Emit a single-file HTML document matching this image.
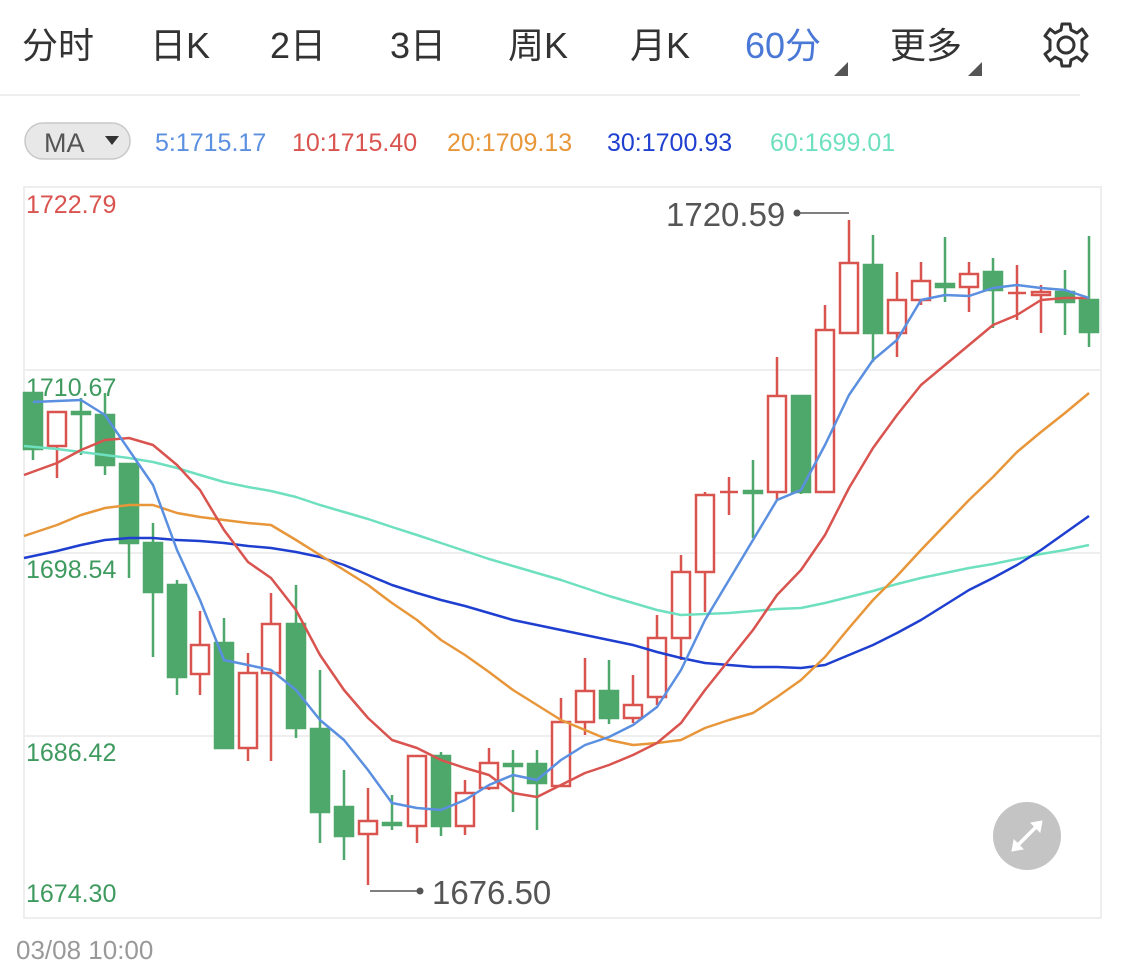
<!DOCTYPE html>
<html><head><meta charset="utf-8"><style>
html,body{margin:0;padding:0;background:#fff;width:1125px;height:975px;overflow:hidden}
svg{display:block}
text{font-family:"Liberation Sans","Noto Sans CJK SC",sans-serif}
</style></head><body>
<svg width="1125" height="975" viewBox="0 0 1125 975" xmlns="http://www.w3.org/2000/svg">
<g font-size="36" fill="#333">
<text x="22" y="58">分时</text>
<text x="150" y="58">日K</text>
<text x="270" y="58">2日</text>
<text x="390" y="58">3日</text>
<text x="508" y="58">周K</text>
<text x="630" y="58">月K</text>
<text x="745" y="58" fill="#4a78d6">60分</text>
<text x="890" y="58">更多</text>
</g>
<polygon points="848,62 848,76 834,76" fill="#555"/>
<polygon points="982,62 982,76 968,76" fill="#555"/>
<g transform="translate(1066,45)" fill="none" stroke="#333" stroke-width="3" stroke-linejoin="round">
<path d="M-4,-21 L4,-21 L5,-15 L11,-12 L16,-16 L21,-9 L16,-5 L16,5 L21,9 L16,16 L11,12 L5,15 L4,21 L-4,21 L-5,15 L-11,12 L-16,16 L-21,9 L-16,5 L-16,-5 L-21,-9 L-16,-16 L-11,-12 L-5,-15 Z"/>
<circle r="8"/>
</g>
<rect x="0" y="94" width="1080" height="2" fill="#eee"/>
<rect x="25" y="123" width="105" height="36" rx="18" fill="#e8e8e8" stroke="#c8c8c8" stroke-width="1.5"/>
<text x="44" y="152" font-size="27" fill="#555">MA</text>
<polygon points="105,136 119,136 112,145" fill="#333"/>
<g font-size="25">
<text x="155" y="151" fill="#5b8fe0">5:1715.17</text>
<text x="292" y="151" fill="#d9534f">10:1715.40</text>
<text x="447" y="151" fill="#e8963a">20:1709.13</text>
<text x="607" y="151" fill="#1e3fcf">30:1700.93</text>
<text x="770" y="151" fill="#6ee0c0">60:1699.01</text>
</g>
<rect x="24" y="187" width="1077" height="731" fill="none" stroke="#eee" stroke-width="2"/>
<g stroke="#eee" stroke-width="2">
<line x1="24" y1="370" x2="1101" y2="370"/>
<line x1="24" y1="553" x2="1101" y2="553"/>
<line x1="24" y1="736" x2="1101" y2="736"/>
</g>
<g font-size="25">
<text x="26" y="213" fill="#d9534f">1722.79</text>
<text x="26" y="396" fill="#3f9a5f">1710.67</text>
<text x="26" y="578" fill="#3f9a5f">1698.54</text>
<text x="26" y="761" fill="#3f9a5f">1686.42</text>
<text x="26" y="902" fill="#3f9a5f">1674.30</text>
</g>
<g stroke-width="2.5">
<g stroke="#4ea86b" fill="#4ea86b">
<line x1="33" y1="393" x2="33" y2="460"/><rect x="24" y="393" width="18" height="56"/>
<line x1="81" y1="398" x2="81" y2="455"/><rect x="72" y="412" width="18" height="2"/>
<line x1="105" y1="393" x2="105" y2="475"/><rect x="96" y="415" width="18" height="50"/>
<line x1="129" y1="464" x2="129" y2="578"/><rect x="120" y="464" width="18" height="79"/>
<line x1="153" y1="523" x2="153" y2="657"/><rect x="144" y="543" width="18" height="49"/>
<line x1="177" y1="580" x2="177" y2="695"/><rect x="168" y="585" width="18" height="92"/>
<line x1="224" y1="618" x2="224" y2="748"/><rect x="215" y="643" width="18" height="105"/>
<line x1="296" y1="585" x2="296" y2="738"/><rect x="287" y="624" width="18" height="104"/>
<line x1="320" y1="670" x2="320" y2="843"/><rect x="311" y="729" width="18" height="83"/>
<line x1="344" y1="770" x2="344" y2="860"/><rect x="335" y="807" width="18" height="29"/>
<line x1="392" y1="795" x2="392" y2="830"/><rect x="383" y="823" width="18" height="2"/>
<line x1="441" y1="752" x2="441" y2="836"/><rect x="432" y="756" width="18" height="70"/>
<line x1="513" y1="750" x2="513" y2="812"/><rect x="504" y="764" width="18" height="2"/>
<line x1="537" y1="750" x2="537" y2="830"/><rect x="528" y="764" width="18" height="19"/>
<line x1="609" y1="660" x2="609" y2="724"/><rect x="600" y="691" width="18" height="27"/>
<line x1="753" y1="460" x2="753" y2="538"/><rect x="744" y="491" width="18" height="2"/>
<line x1="801" y1="396" x2="801" y2="494"/><rect x="792" y="396" width="18" height="96"/>
<line x1="873" y1="235" x2="873" y2="362"/><rect x="864" y="265" width="18" height="68"/>
<line x1="945" y1="237" x2="945" y2="302"/><rect x="936" y="284" width="18" height="3"/>
<line x1="993" y1="258" x2="993" y2="328"/><rect x="984" y="272" width="18" height="18"/>
<line x1="1065" y1="270" x2="1065" y2="335"/><rect x="1056" y="292" width="18" height="10"/>
<line x1="1089" y1="236" x2="1089" y2="347"/><rect x="1080" y="300" width="18" height="32"/>
</g>
<g stroke="#d9534f" fill="#fff">
<line x1="57" y1="412" x2="57" y2="478"/><rect x="48" y="412" width="18" height="34"/>
<line x1="200" y1="611" x2="200" y2="695"/><rect x="191" y="645" width="18" height="29"/>
<line x1="248" y1="653" x2="248" y2="761"/><rect x="239" y="673" width="18" height="75"/>
<line x1="271" y1="593" x2="271" y2="761"/><rect x="262" y="624" width="18" height="49"/>
<line x1="368" y1="788" x2="368" y2="885"/><rect x="359" y="821" width="18" height="13"/>
<line x1="417" y1="756" x2="417" y2="843"/><rect x="408" y="756" width="18" height="70"/>
<line x1="465" y1="780" x2="465" y2="835"/><rect x="456" y="793" width="18" height="33"/>
<line x1="489" y1="748" x2="489" y2="790"/><rect x="480" y="763" width="18" height="25"/>
<line x1="561" y1="698" x2="561" y2="787"/><rect x="552" y="722" width="18" height="64"/>
<line x1="585" y1="658" x2="585" y2="735"/><rect x="576" y="691" width="18" height="31"/>
<line x1="633" y1="675" x2="633" y2="723"/><rect x="624" y="705" width="18" height="13"/>
<line x1="657" y1="615" x2="657" y2="705"/><rect x="648" y="638" width="18" height="59"/>
<line x1="681" y1="555" x2="681" y2="660"/><rect x="672" y="572" width="18" height="66"/>
<line x1="705" y1="492" x2="705" y2="612"/><rect x="696" y="495" width="18" height="77"/>
<line x1="729" y1="477" x2="729" y2="515"/><line x1="720" y1="492" x2="738" y2="492"/>
<line x1="777" y1="357" x2="777" y2="500"/><rect x="768" y="396" width="18" height="96"/>
<line x1="825" y1="305" x2="825" y2="492"/><rect x="816" y="330" width="18" height="162"/>
<line x1="849" y1="220" x2="849" y2="333"/><rect x="840" y="263" width="18" height="70"/>
<line x1="897" y1="272" x2="897" y2="357"/><rect x="888" y="300" width="18" height="33"/>
<line x1="921" y1="262" x2="921" y2="305"/><rect x="912" y="281" width="18" height="19"/>
<line x1="969" y1="262" x2="969" y2="312"/><rect x="960" y="274" width="18" height="13"/>
<line x1="1017" y1="265" x2="1017" y2="320"/><line x1="1008" y1="293" x2="1026" y2="293"/>
<line x1="1041" y1="285" x2="1041" y2="333"/><rect x="1032" y="292" width="18" height="3"/>
</g>
</g>
<g fill="none" stroke-width="2.5" stroke-linejoin="round">
<polyline stroke="#6ee0c0" points="24,446 57,449 81,452 105,455 129,458 153,462 177,468 200,475 224,482 248,487 271,491 296,497 320,505 344,512 368,519 392,527 417,535 441,543 465,551 489,559 513,566 537,573 561,580 585,588 609,596 633,603 657,610 681,615 705,614 729,613 753,611 777,609 801,608 825,603 849,597 873,591 897,584 921,578 945,573 969,568 993,564 1017,559 1041,554 1065,550 1089,545"/>
<polyline stroke="#1e3fcf" points="24,558 57,551 81,545 105,540 129,538 153,538 177,540 200,541 224,543 248,546 271,548 296,552 320,557 344,565 368,575 392,585 417,593 441,600 465,606 489,613 513,620 537,625 561,630 585,635 609,640 633,645 657,652 681,658 705,663 729,665 753,667 777,667 801,668 825,665 849,655 873,645 897,633 921,620 945,605 969,590 993,578 1017,565 1041,550 1065,533 1089,516"/>
<polyline stroke="#e8963a" points="24,536 57,525 81,515 105,508 129,505 153,505 177,513 200,517 224,520 248,523 271,525 296,540 320,555 344,570 368,585 392,603 417,620 441,640 465,655 489,672 513,690 537,705 561,720 585,730 609,740 633,745 657,743 681,740 705,728 729,720 753,713 777,697 801,680 825,657 849,628 873,600 897,576 921,550 945,525 969,500 993,477 1017,452 1041,432 1065,413 1089,393"/>
<polyline stroke="#d9534f" points="24,475 57,463 81,450 105,440 129,438 153,445 177,465 200,490 224,530 248,562 271,578 296,610 320,655 344,690 368,718 392,740 417,748 441,760 465,768 489,775 513,793 537,797 561,785 585,773 609,765 633,755 657,743 681,723 705,690 729,660 753,630 777,595 801,570 825,535 849,488 873,448 897,415 921,385 945,365 969,345 993,325 1017,315 1041,300 1065,298 1089,298"/>
<polyline stroke="#5b8fe0" points="33,402 81,400 105,415 129,450 153,485 177,550 200,600 224,660 248,665 271,670 296,690 320,720 344,740 368,770 392,803 417,808 441,810 465,800 489,785 513,775 537,780 561,760 585,745 609,737 633,725 657,707 681,670 705,620 729,580 753,540 777,500 801,490 825,445 849,395 873,360 897,340 921,300 945,295 969,296 993,288 1017,285 1041,288 1065,290 1089,298"/>
</g>
<line x1="797" y1="213" x2="849" y2="213" stroke="#555" stroke-width="1.5"/>
<circle cx="797" cy="213" r="3.5" fill="#555"/>
<text x="666" y="226" font-size="33" fill="#555">1720.59</text>
<line x1="370" y1="891" x2="420" y2="891" stroke="#555" stroke-width="1.5"/>
<circle cx="420" cy="891" r="3.5" fill="#555"/>
<text x="432" y="904" font-size="33" fill="#555">1676.50</text>
<circle cx="1027" cy="836" r="34" fill="#c4c4c4"/>
<g stroke="#fff" stroke-width="3.5" stroke-linecap="round" fill="#fff">
<line x1="1017" y1="846" x2="1037" y2="826"/>
<polygon points="1042,821 1031,823 1040,832" stroke-width="1"/>
<polygon points="1012,851 1023,849 1014,840" stroke-width="1"/>
</g>
<text x="16" y="959" font-size="26" fill="#999">03/08 10:00</text>
</svg>
</body></html>
